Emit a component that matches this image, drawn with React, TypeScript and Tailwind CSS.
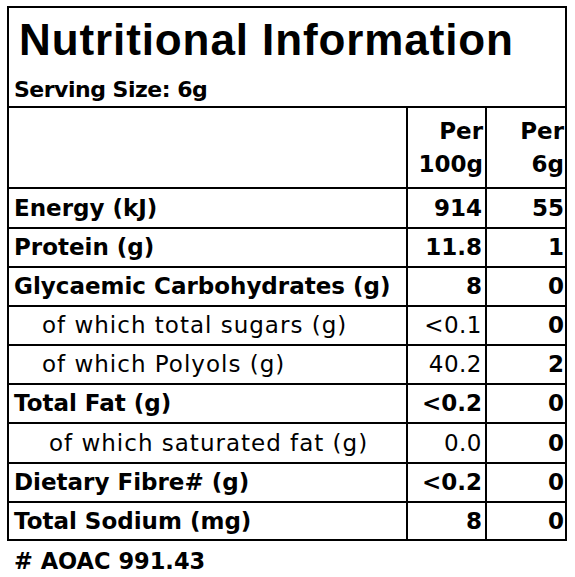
import React from "react";

type Row = {
  label: string;
  a: string;
  b: string;
  labelBold: boolean;
  aBold: boolean;
  indent: "none" | "sub" | "sub2";
  h: string;
};

const rows: Row[] = [
  { label: "Energy (kJ)", a: "914", b: "55", labelBold: true, aBold: true, indent: "none", h: "h-[40px]" },
  { label: "Protein (g)", a: "11.8", b: "1", labelBold: true, aBold: true, indent: "none", h: "h-[39px]" },
  { label: "Glycaemic Carbohydrates (g)", a: "8", b: "0", labelBold: true, aBold: true, indent: "none", h: "h-[39px]" },
  { label: "of which total sugars (g)", a: "<0.1", b: "0", labelBold: false, aBold: false, indent: "sub", h: "h-[39px]" },
  { label: "of which Polyols (g)", a: "40.2", b: "2", labelBold: false, aBold: false, indent: "sub", h: "h-[39px]" },
  { label: "Total Fat (g)", a: "<0.2", b: "0", labelBold: true, aBold: true, indent: "none", h: "h-[39px]" },
  { label: "of which saturated fat (g)", a: "0.0", b: "0", labelBold: false, aBold: false, indent: "sub2", h: "h-[40px]" },
  { label: "Dietary Fibre# (g)", a: "<0.2", b: "0", labelBold: true, aBold: true, indent: "none", h: "h-[39px]" },
  { label: "Total Sodium (mg)", a: "8", b: "0", labelBold: true, aBold: true, indent: "none", h: "h-[38px]" },
];

const dv = "font-['DejaVu_Sans',sans-serif]";

export default function App() {
  return (
    <div className="w-[575px] h-[577px] bg-white text-black pt-[6px] pl-[7px]">
      <div className="w-[560px] border-2 border-black">
        <div className="h-[98px] flex flex-col">
          <div className="pt-[10px] pl-[10px] h-[60px] text-[44px] leading-[44px] font-bold tracking-[0.9px] font-['Liberation_Sans',Arial,sans-serif] whitespace-nowrap">
            Nutritional Information
          </div>
          <div className={`${dv} mt-[11px] pl-[5px] text-[22px] leading-[22px] font-bold tracking-[-0.5px] whitespace-nowrap`}>
            Serving Size: 6g
          </div>
        </div>
        <div className={`grid grid-cols-[397px_2px_77px_2px_78px] border-t-2 border-black h-[81px] ${dv} font-bold text-[23px] leading-[33px]`}>
          <div />
          <div className="bg-black" />
          <div className="text-right pr-[2px] pt-[7px]">
            <div>Per</div>
            <div>100g</div>
          </div>
          <div className="bg-black" />
          <div className="text-right pr-[1px] pt-[7px]">
            <div>Per</div>
            <div>6g</div>
          </div>
        </div>
        {rows.map((r, i) => (
          <div
            key={i}
            className={`grid grid-cols-[397px_2px_77px_2px_78px] border-t-2 border-black ${r.h} ${dv} text-[23px]`}
          >
            <div
              className={`flex items-center whitespace-nowrap ${
                r.labelBold ? "font-bold" : "font-normal tracking-[1px]"
              } ${r.indent === "none" ? "pl-[5px]" : r.indent === "sub" ? "pl-[33px]" : "pl-[40px]"}`}
            >
              {r.label}
            </div>
            <div className="bg-black" />
            <div
              className={`flex items-center justify-end pr-[3px] ${
                r.aBold ? "font-bold" : "font-normal tracking-[0.5px]"
              }`}
            >
              {r.a}
            </div>
            <div className="bg-black" />
            <div className="flex items-center justify-end pr-[1px] font-bold">{r.b}</div>
          </div>
        ))}
      </div>
      <div className={`${dv} font-bold text-[22.5px] leading-[26px] pl-[7px] mt-[7px] whitespace-nowrap`}>
        # AOAC 991.43
      </div>
    </div>
  );
}
